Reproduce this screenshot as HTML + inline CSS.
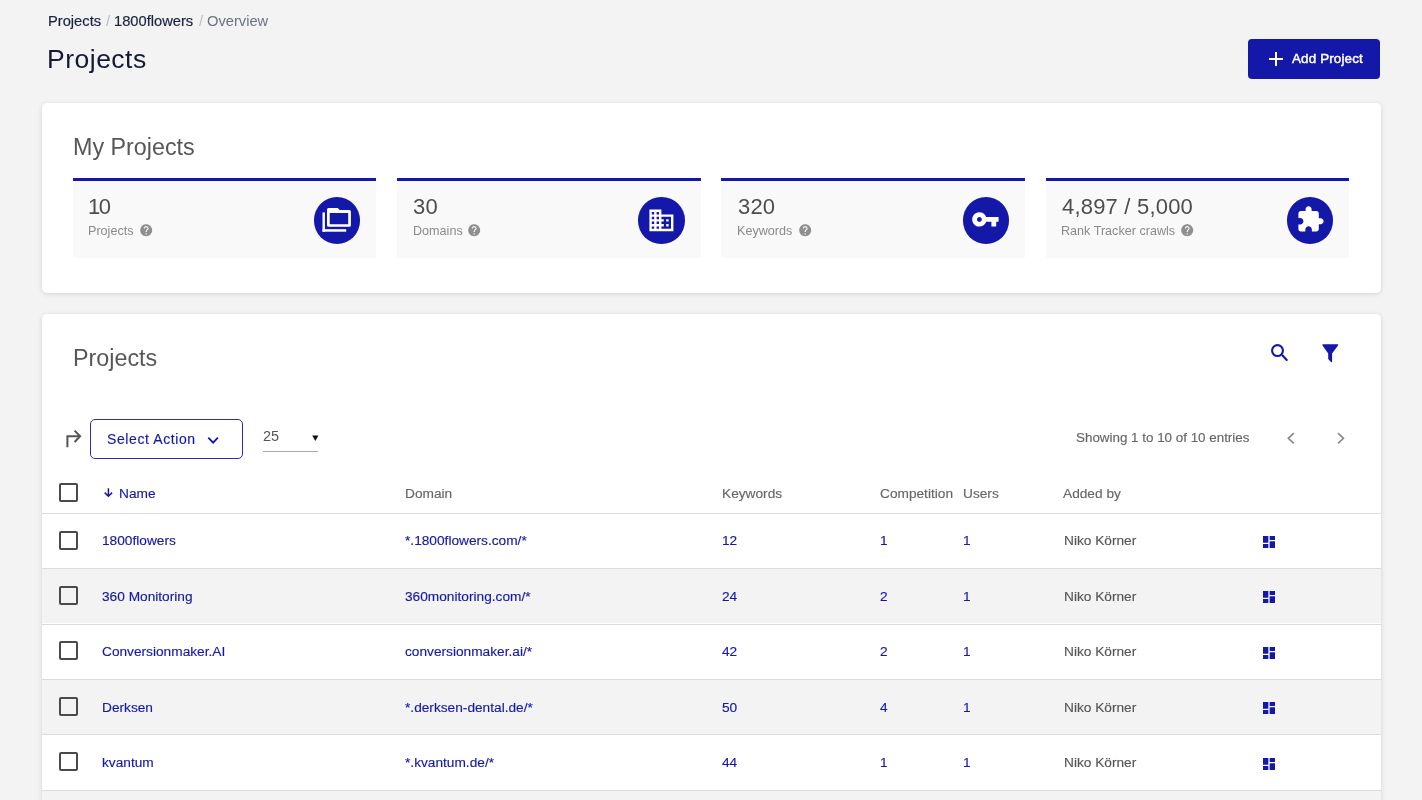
<!DOCTYPE html>
<html><head><meta charset="utf-8"><title>Projects</title>
<style>
html,body{margin:0;padding:0}
body{width:1422px;height:800px;overflow:hidden;background:#f3f3f3;position:relative;font-family:"Liberation Sans",sans-serif}
.t{position:absolute;white-space:nowrap;will-change:transform}
.s{-webkit-text-stroke:0.15px currentColor}
svg{display:block}
</style></head><body>
<div class="t" style="left:48.00px;top:14.00px;font-size:14.7px;line-height:14.7px;color:#1c2340;-webkit-text-stroke:0.2px #1c2340;">Projects</div>
<div class="t" style="left:105.50px;top:14.00px;font-size:14.7px;line-height:14.7px;color:#b8bcc6;">/</div>
<div class="t" style="left:114.00px;top:14.00px;font-size:14.7px;line-height:14.7px;color:#1c2340;-webkit-text-stroke:0.2px #1c2340;">1800flowers</div>
<div class="t" style="left:198.50px;top:14.00px;font-size:14.7px;line-height:14.7px;color:#b8bcc6;">/</div>
<div class="t" style="left:207.30px;top:14.00px;font-size:14.7px;line-height:14.7px;color:#6b7283;">Overview</div>
<div class="t" style="left:46.90px;top:46.00px;font-size:26.5px;line-height:26.5px;color:#141a33;letter-spacing:0.5px;">Projects</div>
<div style="position:absolute;left:1248px;top:39px;width:132px;height:40px;background:#1418a8;border-radius:4px"></div>
<svg style="position:absolute;left:1268px;top:51px" width="16" height="16"><path d="M8 1v14M1 8h14" stroke="#fff" stroke-width="2"/></svg>
<div class="t" style="left:1291.70px;top:52.00px;font-size:13.4px;line-height:13.4px;color:#fff;-webkit-text-stroke:0.45px #fff;letter-spacing:0.15px;">Add Project</div>
<div style="position:absolute;left:42px;top:102.5px;width:1339px;height:190px;background:#fff;border-radius:5px;box-shadow:0 1px 5px rgba(0,0,0,0.13)"></div>
<div class="t" style="left:72.80px;top:136.00px;font-size:23.3px;line-height:23.3px;color:#575757;">My Projects</div>
<div style="position:absolute;left:72.5px;top:178px;width:303.7px;height:80.4px;background:#f9f9f9;border-top:3px solid #1418a8;box-sizing:border-box"></div>
<div class="t" style="left:87.50px;top:196.00px;font-size:22px;line-height:22px;color:#4d4d4d;letter-spacing:-1.6px;">10</div>
<div class="t" style="left:88.30px;top:225.00px;font-size:12.6px;line-height:12.6px;color:#8a8a8a;">Projects</div>
<svg style="position:absolute;left:138.80px;top:223.40px" width="14.4" height="14.4" viewBox="0 0 24 24"><path fill="#8f8f8f" d="M12 2C6.48 2 2 6.48 2 12s4.48 10 10 10 10-4.48 10-10S17.52 2 12 2zm1 17h-2v-2h2v2zm2.07-7.75l-.9.92C13.45 12.9 13 13.5 13 15h-2v-.5c0-1.1.45-2.1 1.17-2.83l1.24-1.26c.37-.36.59-.86.59-1.41 0-1.1-.9-2-2-2s-2 .9-2 2H8c0-2.21 1.79-4 4-4s4 1.79 4 4c0 .88-.36 1.68-.93 2.25z"/></svg>
<div style="position:absolute;left:313.70px;top:197px;width:46.5px;height:46.5px;background:#1418a8;border-radius:50%"></div>
<div style="position:absolute;left:396.9px;top:178px;width:303.7px;height:80.4px;background:#f9f9f9;border-top:3px solid #1418a8;box-sizing:border-box"></div>
<div class="t" style="left:413.10px;top:196.00px;font-size:22px;line-height:22px;color:#4d4d4d;letter-spacing:0.2px;">30</div>
<div class="t" style="left:412.70px;top:225.00px;font-size:12.6px;line-height:12.6px;color:#8a8a8a;">Domains</div>
<svg style="position:absolute;left:467.30px;top:223.40px" width="14.4" height="14.4" viewBox="0 0 24 24"><path fill="#8f8f8f" d="M12 2C6.48 2 2 6.48 2 12s4.48 10 10 10 10-4.48 10-10S17.52 2 12 2zm1 17h-2v-2h2v2zm2.07-7.75l-.9.92C13.45 12.9 13 13.5 13 15h-2v-.5c0-1.1.45-2.1 1.17-2.83l1.24-1.26c.37-.36.59-.86.59-1.41 0-1.1-.9-2-2-2s-2 .9-2 2H8c0-2.21 1.79-4 4-4s4 1.79 4 4c0 .88-.36 1.68-.93 2.25z"/></svg>
<div style="position:absolute;left:638.10px;top:197px;width:46.5px;height:46.5px;background:#1418a8;border-radius:50%"></div>
<div style="position:absolute;left:721.3px;top:178px;width:303.7px;height:80.4px;background:#f9f9f9;border-top:3px solid #1418a8;box-sizing:border-box"></div>
<div class="t" style="left:737.50px;top:196.00px;font-size:22px;line-height:22px;color:#4d4d4d;letter-spacing:0.2px;">320</div>
<div class="t" style="left:737.10px;top:225.00px;font-size:12.6px;line-height:12.6px;color:#8a8a8a;">Keywords</div>
<svg style="position:absolute;left:797.80px;top:223.40px" width="14.4" height="14.4" viewBox="0 0 24 24"><path fill="#8f8f8f" d="M12 2C6.48 2 2 6.48 2 12s4.48 10 10 10 10-4.48 10-10S17.52 2 12 2zm1 17h-2v-2h2v2zm2.07-7.75l-.9.92C13.45 12.9 13 13.5 13 15h-2v-.5c0-1.1.45-2.1 1.17-2.83l1.24-1.26c.37-.36.59-.86.59-1.41 0-1.1-.9-2-2-2s-2 .9-2 2H8c0-2.21 1.79-4 4-4s4 1.79 4 4c0 .88-.36 1.68-.93 2.25z"/></svg>
<div style="position:absolute;left:962.50px;top:197px;width:46.5px;height:46.5px;background:#1418a8;border-radius:50%"></div>
<div style="position:absolute;left:1045.6px;top:178px;width:303.7px;height:80.4px;background:#f9f9f9;border-top:3px solid #1418a8;box-sizing:border-box"></div>
<div class="t" style="left:1061.80px;top:196.00px;font-size:22px;line-height:22px;color:#4d4d4d;letter-spacing:0.2px;">4,897 / 5,000</div>
<div class="t" style="left:1061.40px;top:225.00px;font-size:12.6px;line-height:12.6px;color:#8a8a8a;">Rank Tracker crawls</div>
<svg style="position:absolute;left:1179.80px;top:223.40px" width="14.4" height="14.4" viewBox="0 0 24 24"><path fill="#8f8f8f" d="M12 2C6.48 2 2 6.48 2 12s4.48 10 10 10 10-4.48 10-10S17.52 2 12 2zm1 17h-2v-2h2v2zm2.07-7.75l-.9.92C13.45 12.9 13 13.5 13 15h-2v-.5c0-1.1.45-2.1 1.17-2.83l1.24-1.26c.37-.36.59-.86.59-1.41 0-1.1-.9-2-2-2s-2 .9-2 2H8c0-2.21 1.79-4 4-4s4 1.79 4 4c0 .88-.36 1.68-.93 2.25z"/></svg>
<div style="position:absolute;left:1286.80px;top:197px;width:46.5px;height:46.5px;background:#1418a8;border-radius:50%"></div>
<svg style="position:absolute;left:0;top:0" width="1422" height="300"><g fill="#fff"><rect x="322.5" y="212.4" width="2.4" height="19.3"/><rect x="322.5" y="229.2" width="23.7" height="2.5"/><path fill-rule="evenodd" d="M328.5 208.1h9.3l1.8 2h9.8a1.5 1.5 0 0 1 1.5 1.5v13.7a1.5 1.5 0 0 1-1.5 1.5h-20.9a1.5 1.5 0 0 1-1.5-1.5v-15.7a1.5 1.5 0 0 1 1.5-1.5zM329.7 213v11.3h18.5v-11.3z"/></g></svg>
<svg style="position:absolute;left:646.6px;top:205.9px" width="28.799999999999997" height="28.799999999999997" viewBox="0 0 24 24"><path fill="#fff" d="M12 7V3H2v18h20V7H12zM6 19H4v-2h2v2zm0-4H4v-2h2v2zm0-4H4V9h2v2zm0-4H4V5h2v2zm4 12H8v-2h2v2zm0-4H8v-2h2v2zm0-4H8V9h2v2zm0-4H8V5h2v2zm10 12h-8v-2h2v-2h-2v-2h2v-2h-2V9h8v10zm-2-8h-2v2h2v-2zm0 4h-2v2h2v-2z"/></svg>
<svg style="position:absolute;left:971.3px;top:205.3px" width="28.799999999999997" height="28.799999999999997" viewBox="0 0 24 24"><path fill="#fff" d="M12.65 10C11.83 7.67 9.61 6 7 6c-3.31 0-6 2.69-6 6s2.69 6 6 6c2.61 0 4.83-1.67 5.65-4H17v4h4v-4h2v-4H12.65zM7 14c-1.1 0-2-.9-2-2s.9-2 2-2 2 .9 2 2-.9 2-2 2z"/></svg>
<svg style="position:absolute;left:1295.6px;top:205.3px" width="28.799999999999997" height="28.799999999999997" viewBox="0 0 24 24"><path fill="#fff" d="M20.5 11H19V7c0-1.1-.9-2-2-2h-4V3.5C13 2.12 11.88 1 10.5 1S8 2.12 8 3.5V5H4c-1.1 0-1.99.9-1.99 2v3.8H3.5c1.49 0 2.7 1.21 2.7 2.7s-1.21 2.7-2.7 2.7H2V20c0 1.1.9 2 2 2h3.8v-1.5c0-1.49 1.21-2.7 2.7-2.7 1.49 0 2.7 1.21 2.7 2.7V22H17c1.1 0 2-.9 2-2v-4h1.5c1.38 0 2.5-1.12 2.5-2.5S21.88 11 20.5 11z"/></svg>
<div style="position:absolute;left:42px;top:314.2px;width:1339px;height:560px;background:#fff;border-radius:5px;box-shadow:0 1px 5px rgba(0,0,0,0.13);overflow:hidden"></div>
<div class="t" style="left:73.10px;top:347.00px;font-size:23.3px;line-height:23.3px;color:#575757;">Projects</div>
<svg style="position:absolute;left:1260px;top:335px" width="90" height="35" viewBox="1260 335 90 35"><circle cx="1277.5" cy="350.6" r="5.45" fill="none" stroke="#1418a8" stroke-width="2.1"/><path d="M1282.6 355.6L1286.7 359.9" stroke="#1418a8" stroke-width="2.2" stroke-linecap="round"/><path d="M1323.2 344.2H1337.4Q1338.8 344.2 1338 345.4L1332.1 353.4V361.6Q1332 362.6 1331.2 362.2L1328.6 359.6Q1328.2 359.2 1328.2 358.6V353.4L1322.5 345.4Q1321.8 344.2 1323.2 344.2Z" fill="#1418a8"/></svg>
<svg style="position:absolute;left:60px;top:425px" width="30" height="30" viewBox="60 425 30 30"><path d="M67.4 447.2V436.3H79" fill="none" stroke="#555" stroke-width="2"/><path d="M74.6 430.6L80.1 436.3L74.6 442" fill="none" stroke="#555" stroke-width="2"/></svg>
<div style="position:absolute;left:89.8px;top:418.9px;width:153px;height:40px;border:1.2px solid #2a2eb2;border-radius:5px;box-sizing:border-box"></div>
<div class="t" style="left:106.80px;top:432.00px;font-size:14px;line-height:14px;color:#1418a8;letter-spacing:0.6px;-webkit-text-stroke:0.15px #1418a8;">Select Action</div>
<svg style="position:absolute;left:200px;top:430px" width="25" height="20" viewBox="200 430 25 20"><path d="M208.3 437.7L213.1 442.6L217.9 437.7" fill="none" stroke="#1418a8" stroke-width="1.9"/></svg>
<div class="t" style="left:263.40px;top:429.00px;font-size:14.5px;line-height:14.5px;color:#555;">25</div>
<div style="position:absolute;left:263px;top:451.2px;width:55px;height:1px;background:#aaa"></div>
<svg style="position:absolute;left:310px;top:433px" width="10" height="10" viewBox="310 433 10 10"><path d="M312.2 435.6H318.4L315.3 441.1Z" fill="#111"/></svg>
<div class="t" style="left:1076.00px;top:431.00px;font-size:13.4px;line-height:13.4px;color:#666;-webkit-text-stroke:0.15px currentColor;">Showing 1 to 10 of 10 entries</div>
<svg style="position:absolute;left:1280px;top:428px" width="70" height="20" viewBox="1280 428 70 20"><path d="M1293.8 433.2L1288.3 438.3L1293.8 443.4" fill="none" stroke="#888" stroke-width="1.6"/><path d="M1338 433.2L1343.5 438.3L1338 443.4" fill="none" stroke="#888" stroke-width="1.6"/></svg>
<div style="position:absolute;left:58.8px;top:483px;width:19.3px;height:19px;border:2px solid #4a4a4a;border-radius:2px;box-sizing:border-box"></div>
<svg style="position:absolute;left:100px;top:484px" width="16" height="16" viewBox="100 484 16 16"><path d="M108.4 488.2V496.3M104.7 492.6L108.4 496.3L112.1 492.6" fill="none" stroke="#1418a8" stroke-width="1.5"/></svg>
<div class="t" style="left:119.00px;top:487.00px;font-size:13.7px;line-height:13.7px;color:#1418a8;-webkit-text-stroke:0.15px currentColor;">Name</div>
<div class="t" style="left:404.90px;top:487.00px;font-size:13.7px;line-height:13.7px;color:#666;-webkit-text-stroke:0.15px currentColor;">Domain</div>
<div class="t" style="left:721.60px;top:487.00px;font-size:13.7px;line-height:13.7px;color:#666;-webkit-text-stroke:0.15px currentColor;">Keywords</div>
<div class="t" style="left:879.80px;top:487.00px;font-size:13.7px;line-height:13.7px;color:#666;-webkit-text-stroke:0.15px currentColor;">Competition</div>
<div class="t" style="left:963.20px;top:487.00px;font-size:13.7px;line-height:13.7px;color:#666;-webkit-text-stroke:0.15px currentColor;">Users</div>
<div class="t" style="left:1063.10px;top:487.00px;font-size:13.7px;line-height:13.7px;color:#666;-webkit-text-stroke:0.15px currentColor;">Added by</div>
<div style="position:absolute;left:42px;top:512.6px;width:1339px;height:1px;background:#dcdcdc"></div>
<div style="position:absolute;left:42px;top:513.60px;width:1339px;height:54.45px;background:#fff"></div>
<div style="position:absolute;left:42px;top:568.05px;width:1339px;height:1px;background:#dcdcdc"></div>
<div style="position:absolute;left:58.8px;top:530.50px;width:19.3px;height:19px;border:2px solid #4a4a4a;border-radius:2px;box-sizing:border-box"></div>
<div class="t" style="left:101.90px;top:534.00px;font-size:13.7px;line-height:13.7px;color:#1418a8;-webkit-text-stroke:0.15px currentColor;">1800flowers</div>
<div class="t" style="left:404.90px;top:534.00px;font-size:13.7px;line-height:13.7px;color:#1418a8;-webkit-text-stroke:0.15px currentColor;">*.1800flowers.com/*</div>
<div class="t" style="left:721.60px;top:534.00px;font-size:13.7px;line-height:13.7px;color:#1418a8;-webkit-text-stroke:0.15px currentColor;">12</div>
<div class="t" style="left:879.80px;top:534.00px;font-size:13.7px;line-height:13.7px;color:#1418a8;-webkit-text-stroke:0.15px currentColor;">1</div>
<div class="t" style="left:963.20px;top:534.00px;font-size:13.7px;line-height:13.7px;color:#1418a8;-webkit-text-stroke:0.15px currentColor;">1</div>
<div class="t" style="left:1063.50px;top:534.00px;font-size:13.7px;line-height:13.7px;color:#555;-webkit-text-stroke:0.15px currentColor;">Niko Körner</div>
<svg style="position:absolute;left:1260.5px;top:534.00px" width="16" height="16" viewBox="0 0 24 24"><path fill="#1418a8" d="M3 13h8V3H3v10zm0 8h8v-6H3v6zm10 0h8V11h-8v10zm0-18v6h8V3h-8z"/></svg>
<div style="position:absolute;left:42px;top:569.05px;width:1339px;height:54.45px;background:#f3f3f3"></div>
<div style="position:absolute;left:42px;top:623.50px;width:1339px;height:1px;background:#dcdcdc"></div>
<div style="position:absolute;left:58.8px;top:585.95px;width:19.3px;height:19px;border:2px solid #4a4a4a;border-radius:2px;box-sizing:border-box"></div>
<div class="t" style="left:101.90px;top:590.00px;font-size:13.7px;line-height:13.7px;color:#1418a8;-webkit-text-stroke:0.15px currentColor;">360 Monitoring</div>
<div class="t" style="left:404.90px;top:590.00px;font-size:13.7px;line-height:13.7px;color:#1418a8;-webkit-text-stroke:0.15px currentColor;">360monitoring.com/*</div>
<div class="t" style="left:721.60px;top:590.00px;font-size:13.7px;line-height:13.7px;color:#1418a8;-webkit-text-stroke:0.15px currentColor;">24</div>
<div class="t" style="left:879.80px;top:590.00px;font-size:13.7px;line-height:13.7px;color:#1418a8;-webkit-text-stroke:0.15px currentColor;">2</div>
<div class="t" style="left:963.20px;top:590.00px;font-size:13.7px;line-height:13.7px;color:#1418a8;-webkit-text-stroke:0.15px currentColor;">1</div>
<div class="t" style="left:1063.50px;top:590.00px;font-size:13.7px;line-height:13.7px;color:#555;-webkit-text-stroke:0.15px currentColor;">Niko Körner</div>
<svg style="position:absolute;left:1260.5px;top:589.45px" width="16" height="16" viewBox="0 0 24 24"><path fill="#1418a8" d="M3 13h8V3H3v10zm0 8h8v-6H3v6zm10 0h8V11h-8v10zm0-18v6h8V3h-8z"/></svg>
<div style="position:absolute;left:42px;top:624.50px;width:1339px;height:54.45px;background:#fff"></div>
<div style="position:absolute;left:42px;top:678.95px;width:1339px;height:1px;background:#dcdcdc"></div>
<div style="position:absolute;left:58.8px;top:641.40px;width:19.3px;height:19px;border:2px solid #4a4a4a;border-radius:2px;box-sizing:border-box"></div>
<div class="t" style="left:101.90px;top:645.00px;font-size:13.7px;line-height:13.7px;color:#1418a8;-webkit-text-stroke:0.15px currentColor;">Conversionmaker.AI</div>
<div class="t" style="left:404.90px;top:645.00px;font-size:13.7px;line-height:13.7px;color:#1418a8;-webkit-text-stroke:0.15px currentColor;">conversionmaker.ai/*</div>
<div class="t" style="left:721.60px;top:645.00px;font-size:13.7px;line-height:13.7px;color:#1418a8;-webkit-text-stroke:0.15px currentColor;">42</div>
<div class="t" style="left:879.80px;top:645.00px;font-size:13.7px;line-height:13.7px;color:#1418a8;-webkit-text-stroke:0.15px currentColor;">2</div>
<div class="t" style="left:963.20px;top:645.00px;font-size:13.7px;line-height:13.7px;color:#1418a8;-webkit-text-stroke:0.15px currentColor;">1</div>
<div class="t" style="left:1063.50px;top:645.00px;font-size:13.7px;line-height:13.7px;color:#555;-webkit-text-stroke:0.15px currentColor;">Niko Körner</div>
<svg style="position:absolute;left:1260.5px;top:644.90px" width="16" height="16" viewBox="0 0 24 24"><path fill="#1418a8" d="M3 13h8V3H3v10zm0 8h8v-6H3v6zm10 0h8V11h-8v10zm0-18v6h8V3h-8z"/></svg>
<div style="position:absolute;left:42px;top:679.95px;width:1339px;height:54.45px;background:#f3f3f3"></div>
<div style="position:absolute;left:42px;top:734.40px;width:1339px;height:1px;background:#dcdcdc"></div>
<div style="position:absolute;left:58.8px;top:696.85px;width:19.3px;height:19px;border:2px solid #4a4a4a;border-radius:2px;box-sizing:border-box"></div>
<div class="t" style="left:101.90px;top:701.00px;font-size:13.7px;line-height:13.7px;color:#1418a8;-webkit-text-stroke:0.15px currentColor;">Derksen</div>
<div class="t" style="left:404.90px;top:701.00px;font-size:13.7px;line-height:13.7px;color:#1418a8;-webkit-text-stroke:0.15px currentColor;">*.derksen-dental.de/*</div>
<div class="t" style="left:721.60px;top:701.00px;font-size:13.7px;line-height:13.7px;color:#1418a8;-webkit-text-stroke:0.15px currentColor;">50</div>
<div class="t" style="left:879.80px;top:701.00px;font-size:13.7px;line-height:13.7px;color:#1418a8;-webkit-text-stroke:0.15px currentColor;">4</div>
<div class="t" style="left:963.20px;top:701.00px;font-size:13.7px;line-height:13.7px;color:#1418a8;-webkit-text-stroke:0.15px currentColor;">1</div>
<div class="t" style="left:1063.50px;top:701.00px;font-size:13.7px;line-height:13.7px;color:#555;-webkit-text-stroke:0.15px currentColor;">Niko Körner</div>
<svg style="position:absolute;left:1260.5px;top:700.35px" width="16" height="16" viewBox="0 0 24 24"><path fill="#1418a8" d="M3 13h8V3H3v10zm0 8h8v-6H3v6zm10 0h8V11h-8v10zm0-18v6h8V3h-8z"/></svg>
<div style="position:absolute;left:42px;top:735.40px;width:1339px;height:54.45px;background:#fff"></div>
<div style="position:absolute;left:42px;top:789.85px;width:1339px;height:1px;background:#dcdcdc"></div>
<div style="position:absolute;left:58.8px;top:752.30px;width:19.3px;height:19px;border:2px solid #4a4a4a;border-radius:2px;box-sizing:border-box"></div>
<div class="t" style="left:101.90px;top:756.00px;font-size:13.7px;line-height:13.7px;color:#1418a8;-webkit-text-stroke:0.15px currentColor;">kvantum</div>
<div class="t" style="left:404.90px;top:756.00px;font-size:13.7px;line-height:13.7px;color:#1418a8;-webkit-text-stroke:0.15px currentColor;">*.kvantum.de/*</div>
<div class="t" style="left:721.60px;top:756.00px;font-size:13.7px;line-height:13.7px;color:#1418a8;-webkit-text-stroke:0.15px currentColor;">44</div>
<div class="t" style="left:879.80px;top:756.00px;font-size:13.7px;line-height:13.7px;color:#1418a8;-webkit-text-stroke:0.15px currentColor;">1</div>
<div class="t" style="left:963.20px;top:756.00px;font-size:13.7px;line-height:13.7px;color:#1418a8;-webkit-text-stroke:0.15px currentColor;">1</div>
<div class="t" style="left:1063.50px;top:756.00px;font-size:13.7px;line-height:13.7px;color:#555;-webkit-text-stroke:0.15px currentColor;">Niko Körner</div>
<svg style="position:absolute;left:1260.5px;top:755.80px" width="16" height="16" viewBox="0 0 24 24"><path fill="#1418a8" d="M3 13h8V3H3v10zm0 8h8v-6H3v6zm10 0h8V11h-8v10zm0-18v6h8V3h-8z"/></svg>
<div style="position:absolute;left:42px;top:790.85px;width:1339px;height:54.45px;background:#f3f3f3"></div>
<div style="position:absolute;left:42px;top:845.30px;width:1339px;height:1px;background:#dcdcdc"></div>
</body></html>
